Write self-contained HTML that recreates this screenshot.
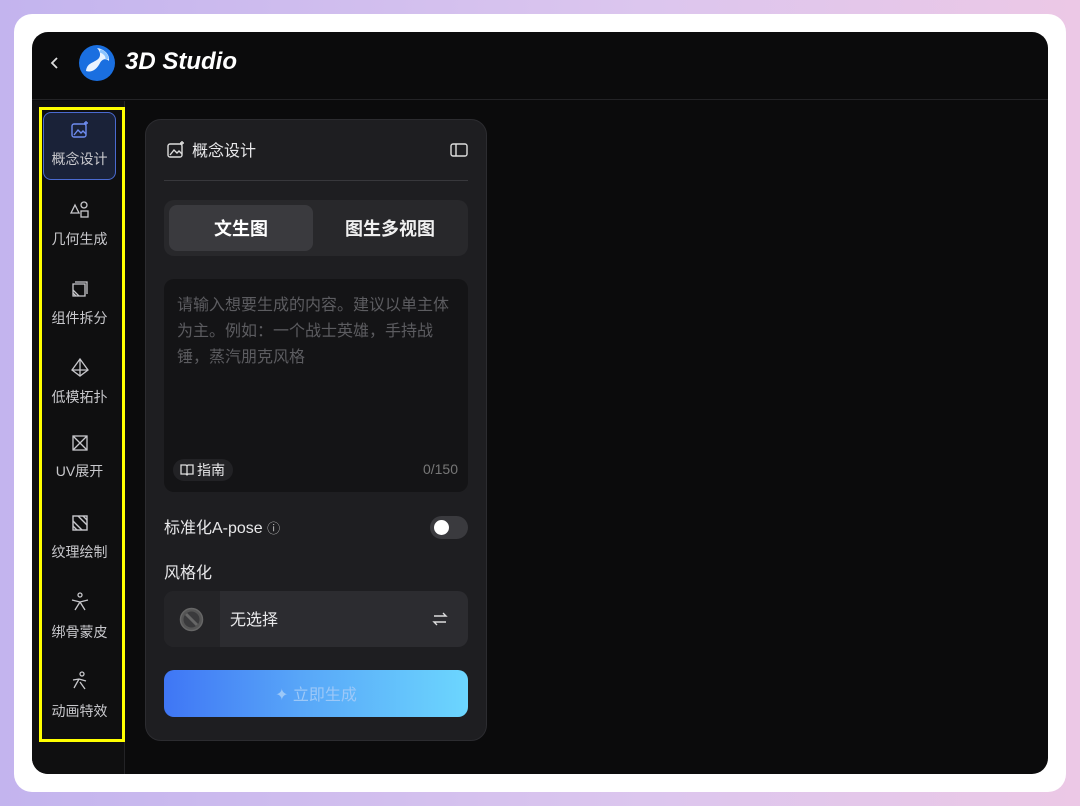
<!DOCTYPE html>
<html><head><meta charset="utf-8"><style>
*{box-sizing:border-box;margin:0;padding:0}
body{width:1080px;height:806px;overflow:hidden;background:linear-gradient(90deg,#c3b4ee,#dcc6ee 60%,#ecc8e6);font-family:"Liberation Sans","Noto Sans CJK SC",sans-serif;position:relative}
.frame{position:absolute;left:14px;top:14px;width:1052px;height:778px;background:#fff;border-radius:18px}
.app{position:absolute;left:32px;top:32px;width:1016px;height:742px;background:#0b0b0c;border-radius:16px;overflow:hidden}
.hdr{position:absolute;left:0;top:0;width:100%;height:68px;border-bottom:1px solid #232326}
.side{position:absolute;left:0;top:69px;width:93px;height:673px;border-right:1px solid #232326;background:#0f0f10}
.ybox{position:absolute;left:7px;top:6px;width:86px;height:635px;border:3px solid #ffff00}
.item{position:absolute;left:0;width:75px;text-align:center;color:#c8c8cc;font-size:14px}
.item svg{display:block;margin:0 auto 9px}
.act{position:absolute;left:1px;top:2px;width:73px;height:68px;background:#1a2238;border:1px solid #4a6ad0;border-radius:8px}
.panel{position:absolute;left:113px;top:87px;width:342px;height:622px;background:#1e1e21;border:1px solid #2c2c30;border-radius:16px}
.t{position:absolute;color:#e8e8ea}
</style></head><body>
<div class="frame"></div>
<div class="app">
 <div class="hdr">
  <svg style="position:absolute;left:18px;top:24px" width="10" height="14" viewBox="0 0 10 14"><path d="M7 2L2 7l5 5" stroke="#ddd" stroke-width="1.8" fill="none"/></svg>
  <svg style="position:absolute;left:46px;top:12px" width="38" height="38" viewBox="0 0 38 38"><circle cx="19" cy="19" r="18" fill="#1a6fe0"/><path d="M8 27c1-9 9-8 13-13 2-3 1-7-2-10 7 1 13 6 12 13-3-3-7-2-9 2-3 6-8 10-14 8z" fill="#eaf3ff"/><path d="M22 7c4 1 7 4 7 8" stroke="#8cc4ff" stroke-width="3" fill="none"/></svg>
  <div class="t" style="left:93px;top:16px;font-size:24px;font-weight:bold;font-style:italic;color:#fff">3D Studio</div>
 </div>
 <div class="side">
  <div class="ybox">
   <div class="act"></div>
   <div class="item" style="top:10px"><svg width="20" height="20" viewBox="0 0 20 20" fill="none" stroke="#6e8cf0" stroke-width="1.4"><rect x="2" y="4" width="14" height="13" rx="2"/><path d="M4 15l4-5 3 3 2-2 3 3"/><path d="M16 1v4M14 3h4"/></svg>概念设计</div>
   <div class="item" style="top:90px"><svg width="22" height="20" viewBox="0 0 22 20" fill="none" stroke="#c8c8cc" stroke-width="1.3"><path d="M6 5l4 8H2z"/><circle cx="15" cy="5" r="3"/><rect x="12" y="11" width="7" height="6"/></svg>几何生成</div>
   <div class="item" style="top:169px"><svg width="20" height="20" viewBox="0 0 20 20" fill="none" stroke="#c8c8cc" stroke-width="1.3"><path d="M3 5h12v12H3z"/><path d="M5 3h12v12"/><path d="M3 11l6 6M3 14l3 3"/></svg>组件拆分</div>
   <div class="item" style="top:248px"><svg width="22" height="20" viewBox="0 0 22 20" fill="none" stroke="#c8c8cc" stroke-width="1.3"><path d="M11 1L3 12l8 6 8-6z"/><path d="M11 1v17M3 12h16"/></svg>低模拓扑</div>
   <div class="item" style="top:324px"><svg width="20" height="18" viewBox="0 0 20 18" fill="none" stroke="#c8c8cc" stroke-width="1.3"><rect x="3" y="2" width="14" height="14"/><path d="M3 2l14 14M17 2L3 16"/></svg>UV展开</div>
   <div class="item" style="top:403px"><svg width="20" height="20" viewBox="0 0 20 20" fill="none" stroke="#c8c8cc" stroke-width="1.4"><rect x="3" y="3" width="14" height="14"/><path d="M3 8l9 9M3 13l4 4M8 3l9 9M13 3l4 4"/></svg>纹理绘制</div>
   <div class="item" style="top:481px"><svg width="20" height="22" viewBox="0 0 20 22" fill="none" stroke="#c8c8cc" stroke-width="1.3"><circle cx="10" cy="4" r="2"/><path d="M2 9l8 2 8-2M10 11l-5 8M10 11l5 8"/></svg>绑骨蒙皮</div>
   <div class="item" style="top:560px"><svg width="20" height="22" viewBox="0 0 20 22" fill="none" stroke="#c8c8cc" stroke-width="1.3"><circle cx="12" cy="4" r="2"/><path d="M3 10l6-1 7 2M9 9l-5 9M10 12l5 7"/></svg>动画特效</div>
  </div>
 </div>
 <div class="panel">
  <svg style="position:absolute;left:20px;top:20px" width="20" height="20" viewBox="0 0 20 20" fill="none" stroke="#ddd" stroke-width="1.4"><rect x="2" y="4" width="14" height="13" rx="2"/><path d="M4 15l4-5 3 3 2-2 3 3"/><path d="M16 1v4M14 3h4"/></svg>
  <div class="t" style="left:46px;top:17px;font-size:16px">概念设计</div>
  <svg style="position:absolute;left:304px;top:22px" width="18" height="16" viewBox="0 0 18 16" fill="none" stroke="#ddd" stroke-width="1.4"><rect x="1" y="2" width="16" height="12" rx="2"/><path d="M6 2v12"/></svg>
  <div style="position:absolute;left:18px;top:60px;width:304px;height:1px;background:#38383c"></div>
  <div style="position:absolute;left:18px;top:80px;width:304px;height:56px;background:#28282b;border-radius:10px">
   <div style="position:absolute;left:5px;top:5px;width:144px;height:46px;background:#3a3a3e;border-radius:8px"></div>
   <div class="t" style="left:5px;top:15px;width:144px;text-align:center;font-size:18px;font-weight:bold;color:#fff">文生图</div>
   <div class="t" style="left:152px;top:15px;width:148px;text-align:center;font-size:18px;font-weight:bold;color:#f0f0f0">图生多视图</div>
  </div>
  <div style="position:absolute;left:18px;top:159px;width:304px;height:213px;background:#141416;border-radius:10px">
   <div class="t" style="left:13px;top:14px;width:285px;font-size:16px;line-height:26px;color:#5c5c60">请输入想要生成的内容。建议以单主体为主。例如：一个战士英雄，手持战锤，蒸汽朋克风格</div>
   <div style="position:absolute;left:9px;top:180px;width:60px;height:22px;background:#222225;border-radius:11px"></div>
   <svg style="position:absolute;left:16px;top:185px" width="14" height="12" viewBox="0 0 14 12" fill="none" stroke="#ddd" stroke-width="1.3"><path d="M1 1h5l1 1 1-1h5v9H8l-1 1-1-1H1zM7 2v9"/></svg>
   <div class="t" style="left:33px;top:181px;font-size:14px">指南</div>
   <div class="t" style="right:10px;top:182px;font-size:14px;color:#777">0/150</div>
  </div>
  <div class="t" style="left:18px;top:394px;font-size:16px">标准化A-pose <span style="font-size:13px;color:#bbb">ⓘ</span></div>
  <div style="position:absolute;left:284px;top:396px;width:38px;height:23px;background:#3a3a3e;border-radius:12px"><div style="position:absolute;left:4px;top:4px;width:15px;height:15px;border-radius:50%;background:#fff"></div></div>
  <div class="t" style="left:18px;top:439px;font-size:16px">风格化</div>
  <div style="position:absolute;left:18px;top:471px;width:304px;height:56px;background:#2c2c30;border-radius:10px;overflow:hidden">
   <div style="position:absolute;left:0;top:0;width:56px;height:56px;background:#242427"></div>
   <svg style="position:absolute;left:15px;top:16px" width="25" height="25" viewBox="0 0 25 25"><circle cx="12.5" cy="12.5" r="11" fill="#555" stroke="#666" stroke-width="1.5"/><circle cx="12.5" cy="12.5" r="8" fill="#3a3a3c"/><path d="M7 7l11 11" stroke="#666" stroke-width="3"/></svg>
   <div class="t" style="left:66px;top:15px;font-size:16px">无选择</div>
   <svg style="position:absolute;left:268px;top:20px" width="16" height="16" viewBox="0 0 16 16" fill="none" stroke="#ddd" stroke-width="1.4"><path d="M2 5h12l-3-3M14 11H2l3 3"/></svg>
  </div>
  <div style="position:absolute;left:18px;top:550px;width:304px;height:47px;border-radius:10px;background:linear-gradient(90deg,#3f76f5,#58a6f8 45%,#6cd6fe)">
   <div class="t" style="left:0;top:11px;width:100%;text-align:center;font-size:16px;color:#9cc8f8">✦ 立即生成</div>
  </div>
 </div>
</div>
</body></html>
